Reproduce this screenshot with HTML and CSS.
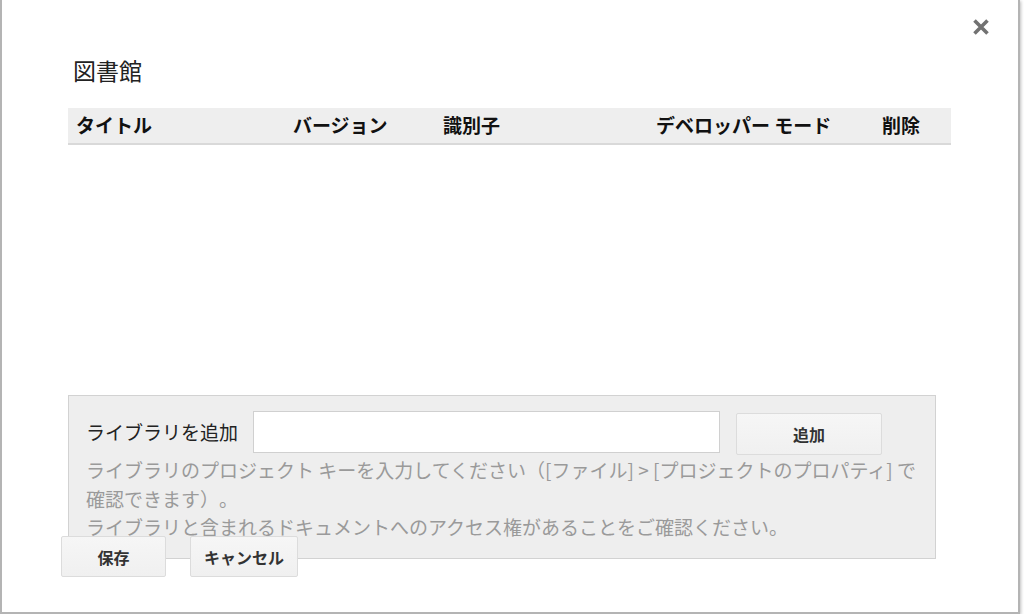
FILE: index.html
```html
<!DOCTYPE html>
<html lang="ja">
    <head>
        <meta charset="UTF-8" />
        <meta name="viewport" content="width=device-width, initial-scale=1.0" />
        <title>図書館</title>
        <link rel="stylesheet" href="styles.css">
    </head>

    <body>
        <div class="dialog">
            <button class="close" title="閉じる">
                <svg width="18" height="18" viewBox="0 0 18 18">
                    <path d="M2.5 2.5 L15.5 15.5 M15.5 2.5 L2.5 15.5" stroke="#727272" stroke-width="3.6" />
                </svg>
            </button>

            <div class="content">
                <h2 class="title">図書館</h2>

                <div class="library-table">
                    <div class="table-head">
                        <div>タイトル</div>
                        <div>バージョン</div>
                        <div>識別子</div>
                        <div>デベロッパー モード</div>
                        <div>削除</div>
                    </div>
                    <div class="table-body"></div>
                </div>

                <div class="add-box">
                    <div class="add-row">
                        <label for="libraryKey">ライブラリを追加</label>
                        <input type="text" id="libraryKey" />
                        <button class="btn btn-add">追加</button>
                    </div>
                    <div class="help">
                        ライブラリのプロジェクト キーを入力してください（[ファイル] &gt; [プロジェクトのプロパティ] で確認できます）。<br />
                        ライブラリと含まれるドキュメントへのアクセス権があることをご確認ください。
                    </div>
                </div>

                <div class="actions">
                    <button class="btn">保存</button>
                    <button class="btn">キャンセル</button>
                </div>
            </div>
        </div>
    </body>
</html>
```

FILE: styles.css
```css
body {
    font-family: "Noto Sans CJK JP", "Noto Sans", sans-serif;
    margin: 0;
    padding: 0;
    background-color: #fff;
    color: #222;
    text-spacing-trim: space-all;
}

.dialog {
    position: relative;
    box-sizing: border-box;
    width: 1020px;
    height: 614px;
    background-color: #fff;
    border: 2px solid #b4b4b4;
    border-top: none;
    box-shadow: 1px 1px 3px rgba(0, 0, 0, 0.25);
}

.close {
    position: absolute;
    top: 18px;
    right: 28px;
    width: 18px;
    height: 18px;
    padding: 0;
    border: none;
    background: none;
    cursor: pointer;
}

.close svg {
    display: block;
}

.content {
    padding: 56px 0 0 66px;
}

.title {
    margin: 0 0 24px 5px;
    font-size: 23px;
    font-weight: normal;
    line-height: 28px;
    color: #222;
}

.library-table {
    width: 883px;
}

.table-head {
    display: grid;
    grid-template-columns: 217px 150px 213px 226px 1fr;
    background-color: #eee;
    border-bottom: 2px solid #d9d9d9;
    height: 35px;
}

.table-head div {
    padding-left: 8px;
    font-size: 19px;
    font-weight: bold;
    line-height: 34px;
    color: #111;
    white-space: nowrap;
}

.table-body {
    height: 250px;
}

.add-box {
    box-sizing: border-box;
    width: 868px;
    height: 164px;
    padding: 15px 12px 0 17px;
    background-color: #eee;
    border: 1px solid #d2d2d2;
}

.add-row {
    display: flex;
    align-items: flex-start;
}

.add-row label {
    width: 167px;
    font-size: 19px;
    line-height: 42px;
    color: #222;
}

.add-row input {
    box-sizing: border-box;
    width: 467px;
    height: 42px;
    margin: 0;
    border: 1px solid #d0d0d0;
    background-color: #fff;
    font-size: 16px;
}

.btn {
    box-sizing: border-box;
    height: 41px;
    min-width: 105px;
    padding: 0 13px;
    font-family: inherit;
    font-size: 16px;
    font-weight: bold;
    color: #333;
    background: linear-gradient(#f6f6f6, #f0f0f0);
    border: 1px solid #dcdcdc;
    border-radius: 2px;
}

.btn-add {
    width: 146px;
    height: 42px;
    margin: 2px 0 0 16px;
}

.help {
    margin-top: 1px;
    font-size: 19px;
    line-height: 28.5px;
    color: #9a9a9a;
}

.actions {
    display: flex;
    gap: 24px;
    margin: -23px 0 0 -7px;
}

.actions .btn:last-child {
    min-width: 107px;
}
```
